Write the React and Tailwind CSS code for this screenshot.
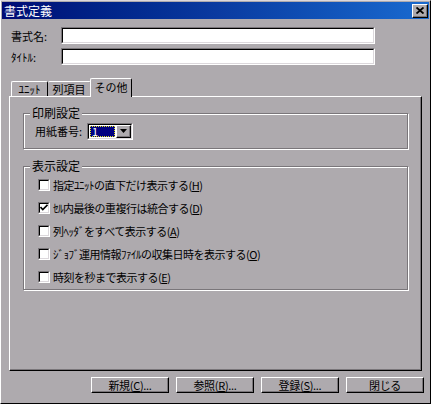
import React from "react";

const font = { fontFamily: '"Noto Sans CJK JP", "Noto Sans", sans-serif' };

function Raised({ className = "", children }) {
  return (
    <div
      className={`border border-t-white border-l-white border-r-black border-b-black bg-[#aeaaae] shadow-[inset_-1px_-1px_0_#7a767a] ${className}`}
    >
      {children}
    </div>
  );
}

function Sunken({ className = "", children }) {
  return (
    <div
      className={`border border-t-[#7a767a] border-l-[#7a767a] border-r-white border-b-white ${className}`}
    >
      <div className="w-full h-full border border-t-black border-l-black border-r-[#dcd8dc] border-b-[#dcd8dc] bg-white">
        {children}
      </div>
    </div>
  );
}

function Group({ title, className = "", children }) {
  return (
    <div
      className={`relative border border-[#7a767a] shadow-[inset_1px_1px_0_#fff,1px_1px_0_#fff] ${className}`}
    >
      <div className="absolute -top-[8px] left-[6px] bg-[#aeaaae] px-[2px] text-[12px] leading-[14px] text-black">
        {title}
      </div>
      {children}
    </div>
  );
}

function Check({ checked, label, k }) {
  return (
    <div className="flex items-center h-[23px] gap-[3px]">
      <div className="w-[12px] h-[12px] border border-t-[#7a767a] border-l-[#7a767a] border-r-white border-b-white">
        <div className="w-full h-full border border-t-black border-l-black border-r-[#dcd8dc] border-b-[#dcd8dc] bg-white flex items-center justify-center">
          {checked && (
            <svg width="8" height="7" viewBox="0 0 8 7">
              <path d="M0.5 3 L2.8 5.5 L7.5 0.8" stroke="black" strokeWidth="1.6" fill="none" />
            </svg>
          )}
        </div>
      </div>
      <span className="text-[11px] leading-[14px] tracking-[-0.5px] text-black whitespace-nowrap">
        {label}(<span className="underline">{k}</span>)
      </span>
    </div>
  );
}

function Btn({ children }) {
  return (
    <Raised className="w-[78px] h-[16px] flex items-center justify-center">
      <span className="text-[11px] leading-[12px] text-black tracking-[-0.3px]">{children}</span>
    </Raised>
  );
}

export default function App() {
  return (
    <div
      style={font}
      className="w-[431px] h-[404px] bg-[#aeaaae] border border-t-[#dcd8dc] border-l-white border-r-black border-b-black p-[1px] flex flex-col overflow-hidden"
    >
      <div className="h-[17px] flex items-center justify-between bg-gradient-to-r from-[#000a74] via-[#0a3aa0] to-[#1a6ad0] pl-[2px] pr-[1px]">
        <span className="text-white text-[12px] leading-[14px]">書式定義</span>
        <Raised className="w-[16px] h-[14px] flex items-center justify-center">
          <svg width="8" height="7" viewBox="0 0 8 7">
            <path d="M0.5 0.5 L7.5 6.5 M7.5 0.5 L0.5 6.5" stroke="black" strokeWidth="1.8" />
          </svg>
        </Raised>
      </div>

      <div className="mt-[8px] flex items-center pl-[9px]">
        <span className="w-[50px] text-[11px] leading-[14px] text-black">書式名:</span>
        <Sunken className="w-[314px] h-[17px]" />
      </div>
      <div className="mt-[4px] flex items-center pl-[9px]">
        <span className="w-[50px] text-[11px] leading-[14px] text-black">ﾀｲﾄﾙ:</span>
        <Sunken className="w-[314px] h-[17px]" />
      </div>

      <div className="mt-[13px] ml-[7px] flex items-end h-[18px]">
        <div className="ml-[2px] w-[37px] h-[15px] border-t border-l border-r border-t-white border-l-white border-r-black rounded-t-[2px] flex items-center justify-center">
          <span className="text-[11px] leading-[12px] text-black">ﾕﾆｯﾄ</span>
        </div>
        <div className="w-[43px] h-[15px] border-t border-r border-t-white border-r-black rounded-t-[2px] flex items-center justify-center">
          <span className="text-[11px] leading-[12px] text-black">列項目</span>
        </div>
        <div className="relative z-10 -ml-[1px] -mb-[1px] w-[42px] h-[19px] bg-[#aeaaae] border-t border-l border-r border-t-white border-l-white border-r-black rounded-t-[2px] flex items-start justify-center pt-[1px]">
          <span className="text-[11px] leading-[14px] text-black">その他</span>
        </div>
      </div>

      <div className="ml-[7px] w-[413px] h-[275px] border border-t-white border-l-white border-r-black border-b-black shadow-[inset_-1px_-1px_0_#7a767a] pt-[16px] pl-[13px]">
        <Group title="印刷設定" className="w-[385px] h-[36px] flex items-center pl-[11px]">
          <span className="text-[11px] leading-[14px] text-black w-[52px]">用紙番号:</span>
          <div className="w-[46px] h-[17px] border border-t-[#7a767a] border-l-[#7a767a] border-r-white border-b-white">
            <div className="w-full h-full border border-t-black border-l-black border-r-[#dcd8dc] border-b-[#dcd8dc] bg-white flex">
              <div className="w-[28px] h-full p-[1px]">
                <div className="w-full h-full bg-[#000080] border border-dotted border-[#e0e020] flex items-center">
                  <span className="text-white text-[11px] leading-[11px] pl-[1px]">1</span>
                </div>
              </div>
              <Raised className="ml-auto w-[15px] h-full flex items-center justify-center">
                <svg width="7" height="4" viewBox="0 0 7 4">
                  <path d="M0 0 H7 L3.5 4 Z" fill="black" />
                </svg>
              </Raised>
            </div>
          </div>
        </Group>

        <Group title="表示設定" className="mt-[17px] w-[385px] h-[124px] pt-[6px] pl-[14px]">
          <Check label="指定ﾕﾆｯﾄの直下だけ表示する" k="H" />
          <Check checked label="ｾﾙ内最後の重複行は統合する" k="D" />
          <Check label="列ﾍｯﾀﾞをすべて表示する" k="A" />
          <Check label="ｼﾞｮﾌﾞ運用情報ﾌｧｲﾙの収集日時を表示する" k="O" />
          <Check label="時刻を秒まで表示する" k="E" />
        </Group>
      </div>

      <div className="mt-[6px] flex justify-end gap-[7px] pr-[5px]">
        <Btn>新規(<span className="underline">C</span>)...</Btn>
        <Btn>参照(<span className="underline">R</span>)...</Btn>
        <Btn>登録(<span className="underline">S</span>)...</Btn>
        <Btn>閉じる</Btn>
      </div>
    </div>
  );
}
